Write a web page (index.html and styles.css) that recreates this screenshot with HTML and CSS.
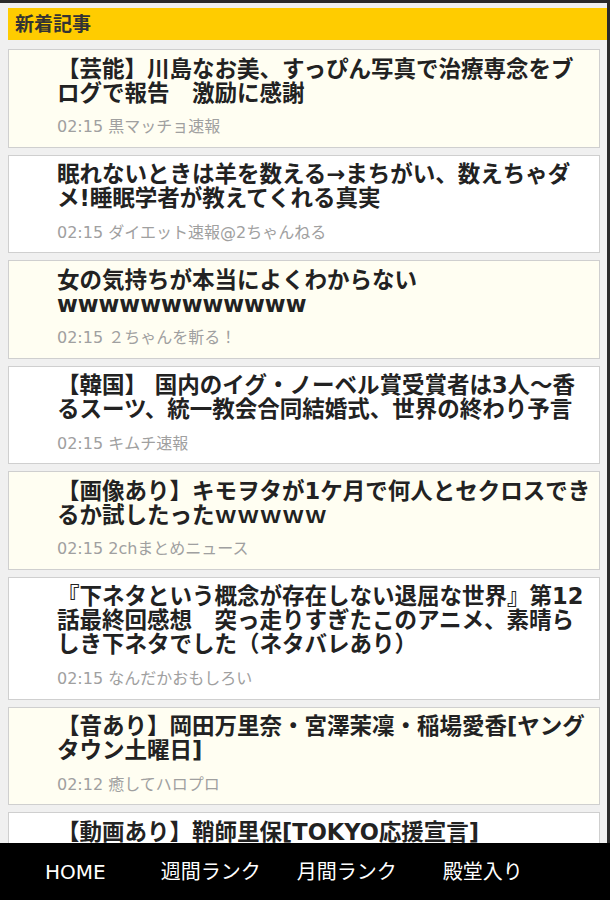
FILE: index.html
```html
<!DOCTYPE html>
<html lang="ja">
<head>
<meta charset="utf-8">
<title>新着記事</title>
<link rel="stylesheet" href="styles.css">
</head>
<body>
<div class="page">
  <h2 class="section-title">新着記事</h2>
  <ul class="articles">
    <li class="article cream">
      <a class="title" href="#">【芸能】川島なお美、すっぴん写真で治療専念をブ<br>ログで報告　激励に感謝</a>
      <div class="meta">02:15 黒マッチョ速報</div>
    </li>
    <li class="article">
      <a class="title" href="#">眠れないときは羊を数える→まちがい、数えちゃダ<br>メ!睡眠学者が教えてくれる真実</a>
      <div class="meta">02:15 ダイエット速報@2ちゃんねる</div>
    </li>
    <li class="article cream">
      <a class="title" href="#">女の気持ちが本当によくわからない<br>wwwwwwwwwwww</a>
      <div class="meta">02:15 ２ちゃんを斬る！</div>
    </li>
    <li class="article">
      <a class="title" href="#">【韓国】 国内のイグ・ノーベル賞受賞者は3人～香<br>るスーツ、統一教会合同結婚式、世界の終わり予言</a>
      <div class="meta">02:15 キムチ速報</div>
    </li>
    <li class="article cream">
      <a class="title" href="#">【画像あり】キモヲタが1ケ月で何人とセクロスでき<br>るか試したったｗｗｗｗｗ</a>
      <div class="meta">02:15 2chまとめニュース</div>
    </li>
    <li class="article">
      <a class="title" href="#">『下ネタという概念が存在しない退屈な世界』第12<br>話最終回感想　突っ走りすぎたこのアニメ、素晴ら<br>しき下ネタでした（ネタバレあり）</a>
      <div class="meta">02:15 なんだかおもしろい</div>
    </li>
    <li class="article cream">
      <a class="title" href="#">【音あり】岡田万里奈・宮澤茉凜・稲場愛香[ヤング<br>タウン土曜日]</a>
      <div class="meta">02:12 癒してハロプロ</div>
    </li>
    <li class="article">
      <a class="title" href="#">【動画あり】鞘師里保[TOKYO応援宣言]</a>
    </li>
  </ul>
</div>
<nav class="footer-nav">
  <a class="nav-item nav-home" href="#">HOME</a>
  <a class="nav-item nav-week" href="#">週間ランク</a>
  <a class="nav-item nav-month" href="#">月間ランク</a>
  <a class="nav-item nav-hall" href="#">殿堂入り</a>
</nav>
</body>
</html>
```
FILE: styles.css
```css
html, body {
  margin: 0;
  padding: 0;
}
body {
  background: #f0f0f0;
  border-top: 3px solid #2a2a2a;
  border-right: 3px solid #2a2a2a;
  height: 900px;
  box-sizing: border-box;
  font-family: "DejaVu Sans", "Noto Sans CJK JP", sans-serif;
  color: #222;
  overflow: hidden;
}
.page {
  padding: 5px 0 0 8px;
}
.section-title {
  margin: 0;
  height: 32px;
  line-height: 32px;
  background: #ffcc00;
  color: #333;
  font-size: 19px;
  font-weight: bold;
  padding-left: 7px;
}
.articles {
  list-style: none;
  margin: 9px 7px 0 0;
  padding: 0;
  display: flex;
  flex-direction: column;
  gap: 7px;
}
.article {
  background: #ffffff;
  border: 1px solid #cfcfcf;
  padding: 6.5px 6px 9.6px 48px;
}
.article.cream {
  background: #fffef2;
}
.title {
  display: block;
  color: #222;
  text-decoration: none;
  font-size: 22.5px;
  line-height: 24px;
  font-weight: bold;
  white-space: nowrap;
}
.meta {
  margin-top: 12.5px;
  font-size: 16px;
  line-height: 20px;
  color: #a0a0a0;
}
.footer-nav {
  position: fixed;
  left: 0;
  right: 0;
  bottom: 0;
  height: 57px;
  background: #000;
  display: flex;
  align-items: center;
}
.nav-item {
  color: #fff;
  text-decoration: none;
  font-size: 20px;
  line-height: 24px;
}
.nav-home { margin-left: 45px; }
.nav-week { margin-left: 55px; }
.nav-month { margin-left: 36px; }
.nav-hall { margin-left: 46px; }
```
